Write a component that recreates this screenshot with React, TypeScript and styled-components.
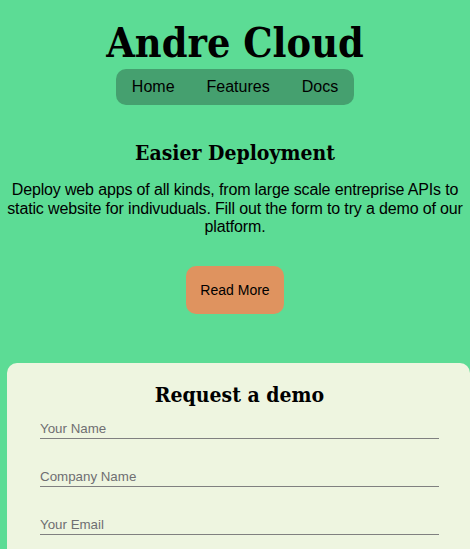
import React from "react";
import styled, { createGlobalStyle } from "styled-components";

const Global = createGlobalStyle`
  html, body { margin: 0; padding: 0; }
  body {
    background: #5cdc95;
    font-family: "Liberation Sans", Arial, sans-serif;
    color: #000;
  }
`;

const Page = styled.div`
  display: flex;
  flex-direction: column;
  align-items: center;
`;

const Header = styled.header`
  display: flex;
  flex-direction: column;
  align-items: center;
  padding-top: 18px;
`;

const Title = styled.h1`
  margin: 0;
  font-family: "DejaVu Serif", Georgia, serif;
  font-stretch: condensed;
  font-weight: 700;
  font-size: 41px;
  line-height: 50px;
`;

const Nav = styled.nav`
  display: flex;
  gap: 32px;
  margin-top: 1px;
  padding: 0 16px;
  height: 36px;
  align-items: center;
  background: #45a06f;
  border-radius: 10px;
`;

const NavLink = styled.a`
  font-size: 16px;
  color: #000;
  text-decoration: none;
`;

const Hero = styled.section`
  display: flex;
  flex-direction: column;
  align-items: center;
  text-align: center;
  padding: 0 6px;
  margin-top: 35px;
`;

const HeroTitle = styled.h2`
  margin: 0;
  font-family: "DejaVu Serif", Georgia, serif;
  font-stretch: condensed;
  font-size: 21px;
  font-weight: 700;
  line-height: 26px;
`;

const HeroText = styled.p`
  margin: 15px 0 0;
  font-size: 16px;
  line-height: 18.5px;
  letter-spacing: -0.15px;
`;

const Button = styled.button`
  margin-top: 29px;
  width: 98px;
  height: 48px;
  border: none;
  border-radius: 10px;
  background: #df935f;
  font-family: "Liberation Sans", Arial, sans-serif;
  font-size: 14px;
  color: #000;
`;

const Card = styled.section`
  align-self: stretch;
  margin: 49px 0 0 7px;
  background: #eef5e0;
  border-radius: 10px 10px 0 0;
  padding: 18px 31px 40px 33px;
  display: flex;
  flex-direction: column;
  align-items: stretch;
`;

const CardTitle = styled.h2`
  margin: 0;
  text-align: center;
  font-family: "DejaVu Serif", Georgia, serif;
  font-stretch: condensed;
  font-size: 21px;
  font-weight: 700;
  line-height: 28px;
`;

const Form = styled.form`
  display: flex;
  flex-direction: column;
  gap: 29px;
  margin-top: 11px;
`;

const Input = styled.input`
  border: none;
  border-bottom: 1px solid #808080;
  background: transparent;
  padding: 0;
  height: 18px;
  font-family: "Liberation Sans", Arial, sans-serif;
  font-size: 13.333px;
  outline: none;
  &::placeholder { color: #6f6f72; }
`;

export default function App() {
  return (
    <Page>
      <Global />
      <Header>
        <Title>Andre Cloud</Title>
        <Nav>
          <NavLink href="#">Home</NavLink>
          <NavLink href="#">Features</NavLink>
          <NavLink href="#">Docs</NavLink>
        </Nav>
      </Header>
      <Hero>
        <HeroTitle>Easier Deployment</HeroTitle>
        <HeroText>
          Deploy web apps of all kinds, from large scale entreprise APIs to static website for indivuduals. Fill out the form to try a demo of our platform.
        </HeroText>
        <Button>Read More</Button>
      </Hero>
      <Card>
        <CardTitle>Request a demo</CardTitle>
        <Form>
          <Input placeholder="Your Name" />
          <Input placeholder="Company Name" />
          <Input placeholder="Your Email" />
        </Form>
      </Card>
    </Page>
  );
}
